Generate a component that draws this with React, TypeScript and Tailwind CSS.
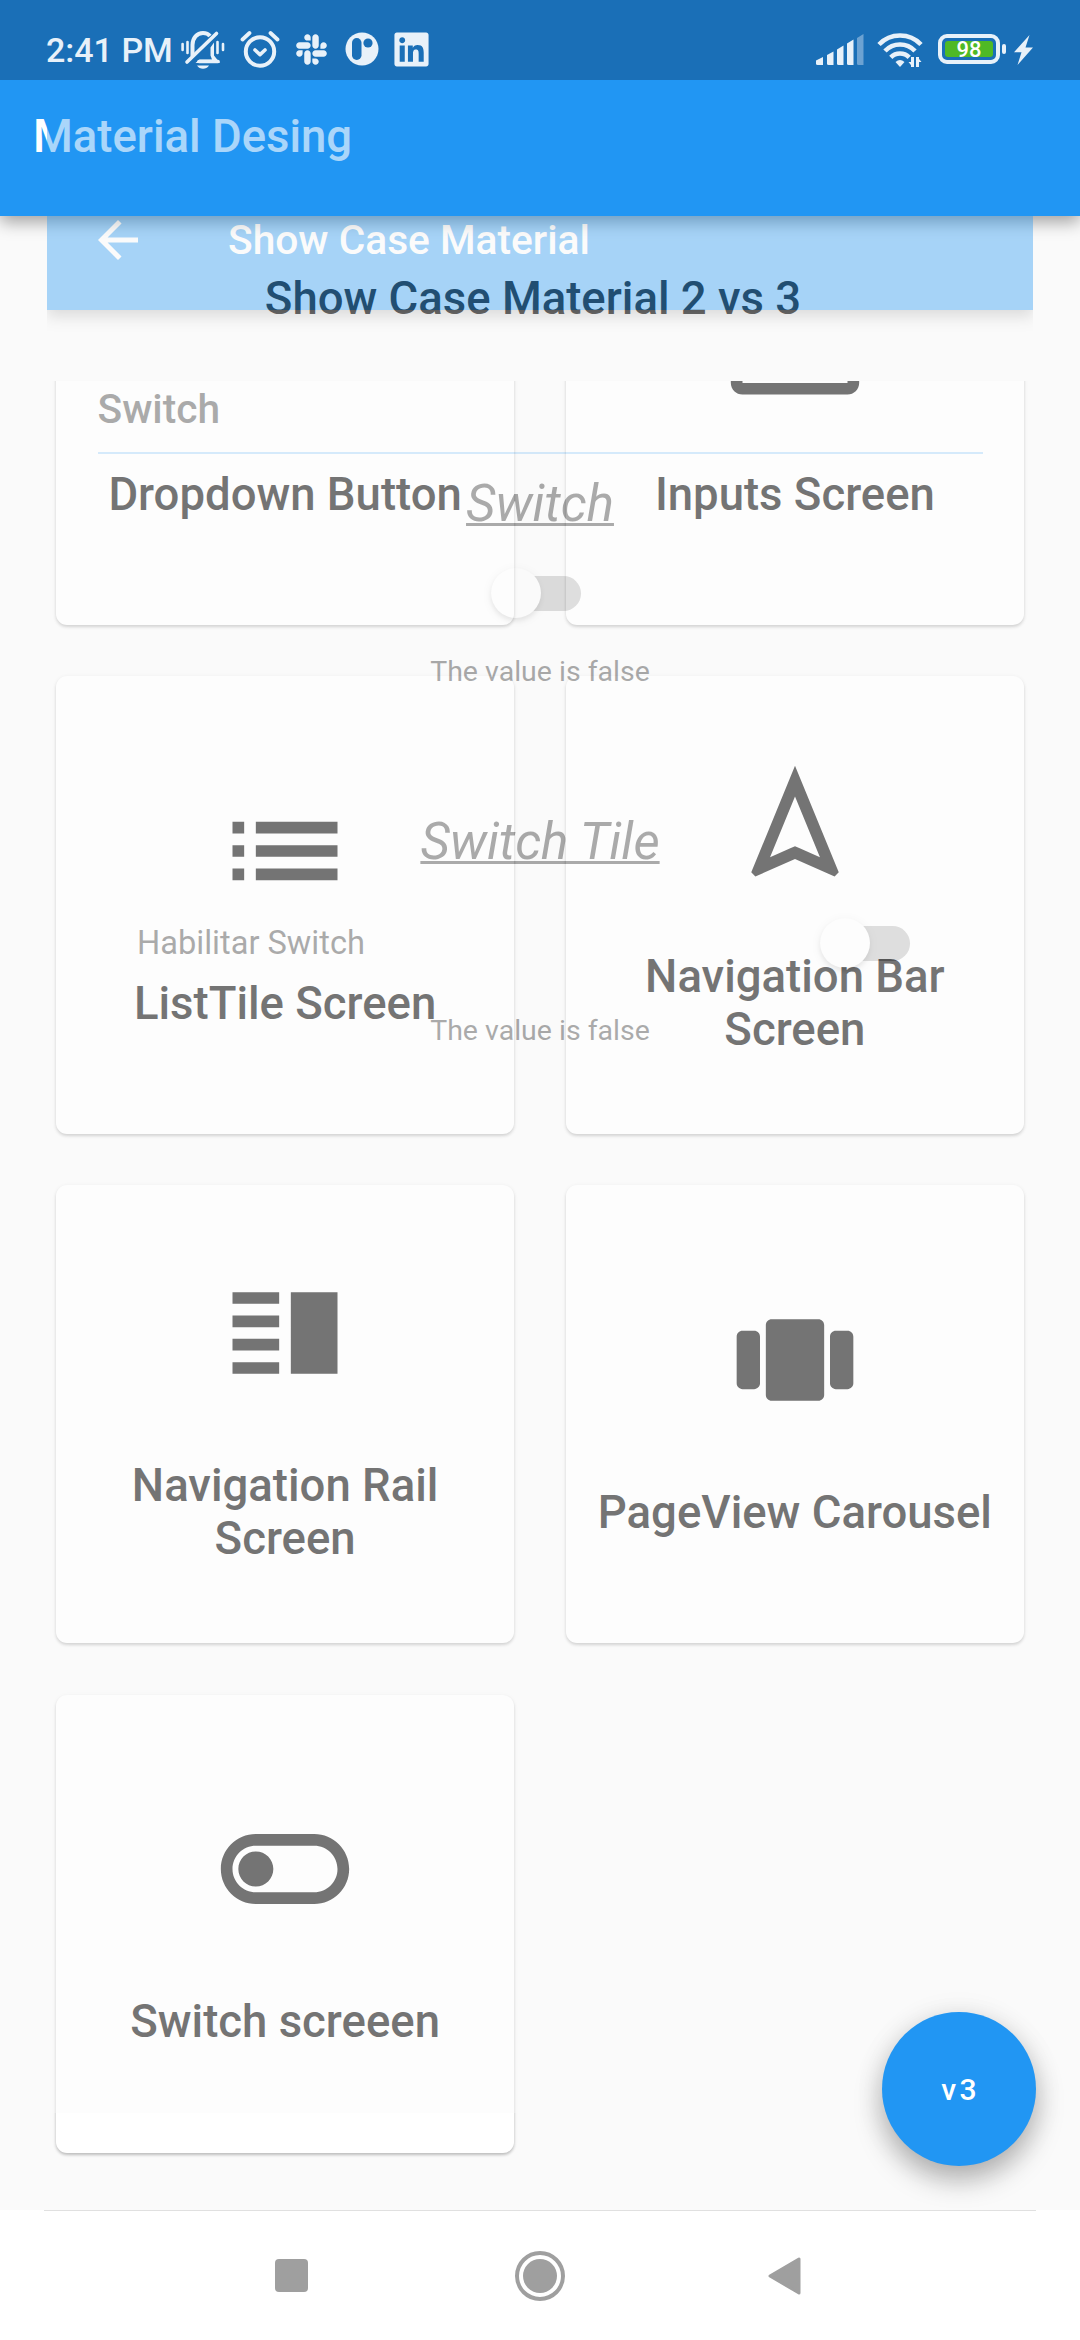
import React from "react";
import { FaLinkedin, FaSlack } from "react-icons/fa";

const CARD_ICONS = {
  dropdown: "M7 10l5 5 5-5z",
  input:
    "M21 3.01H3c-1.1 0-2 .9-2 2V9h2V4.99h18v14.03H3V15H1v4.01c0 1.1.9 1.98 2 1.98h18c1.1 0 2-.88 2-1.98v-14c0-1.11-.9-2-2-2zM11 16l4-4-4-4v3H1v2h10v3z",
  list: "M3 13h2v-2H3v2zm0 4h2v-2H3v2zm0-8h2V7H3v2zm4 4h14v-2H7v2zm0 4h14v-2H7v2zM7 7v2h14V7H7z",
  navigation:
    "M12 7.27l4.28 10.43-3.47-1.53-.81-.36-.81.36-3.47 1.53L12 7.27M12 2L4.5 20.29l.71.71L12 18l6.79 3 .71-.71L12 2z",
  split:
    "M3 15h8v-2H3v2zm0 4h8v-2H3v2zm0-8h8V9H3v2zm0-6v2h8V5H3zm10 0h8v14h-8V5z",
  carousel:
    "M3 7h2c.55 0 1 .45 1 1v8c0 .55-.45 1-1 1H3c-.55 0-1-.45-1-1V8c0-.55.45-1 1-1zm5-2h8c.55 0 1 .45 1 1v12c0 .55-.45 1-1 1H8c-.55 0-1-.45-1-1V6c0-.55.45-1 1-1zm11 2h2c.55 0 1 .45 1 1v8c0 .55-.45 1-1 1h-2c-.55 0-1-.45-1-1V8c0-.55.45-1 1-1z",
  toggle:
    "M17 6H7c-3.31 0-6 2.69-6 6s2.69 6 6 6h10c3.31 0 6-2.69 6-6s-2.69-6-6-6zm0 10H7c-2.21 0-4-1.79-4-4s1.79-4 4-4h10c2.21 0 4 1.79 4 4s-1.79 4-4 4zM7 9c-1.66 0-3 1.34-3 3s1.34 3 3 3 3-1.34 3-3-1.34-3-3-3z",
};

const CARDS: { icon: keyof typeof CARD_ICONS; label: string }[] = [
  { icon: "dropdown", label: "Dropdown Button" },
  { icon: "input", label: "Inputs Screen" },
  { icon: "list", label: "ListTile Screen" },
  { icon: "navigation", label: "Navigation Bar Screen" },
  { icon: "split", label: "Navigation Rail Screen" },
  { icon: "carousel", label: "PageView Carousel" },
  { icon: "toggle", label: "Switch screeen" },
];

function StatusBar() {
  return (
    <div className="relative z-10 flex h-20 shrink-0 items-start bg-[#1a6fb7] text-[#e8f1f9]">
      <span className="ml-[46px] mt-[30px] w-[131px] whitespace-nowrap text-[34px] font-medium leading-10">
        2:41 PM
      </span>
      <svg className="ml-1 mt-[30px] h-10 w-11" viewBox="0 0 44 40" fill="none" stroke="currentColor" strokeLinecap="round">
        <path d="M11.500 26V15c0-7 4.500-12 10.500-12c3 0 5.500 1 7 3" strokeWidth="4" strokeLinecap="butt" />
        <path d="M33 12.500v13l6 7.500H14.500l4-3.500H31l-1.500-4v-8z" fill="currentColor" stroke="none" />
        <path d="M18 31.500h19" strokeWidth="3.600" />
        <path d="M6 32L35.500 3.500" strokeWidth="3.600" />
        <path d="M16 35.500h12c-1.500 2.200-3.500 3.300-6 3.300s-4.500-1.100-6-3.300z" fill="currentColor" stroke="none" />
        <path d="M1.600 14v6M6.500 12v11M36.500 12v11M42 14v6" strokeWidth="2.600" />
      </svg>
      <svg className="ml-[15px] mt-[30px] h-10 w-10" viewBox="0 0 40 40" fill="none" stroke="currentColor" strokeLinecap="round">
        <circle cx="20" cy="21.500" r="14.200" strokeWidth="4" />
        <path d="M15 20l5 4.600 5-4.600" strokeWidth="3.600" strokeLinejoin="round" />
        <path d="M2.500 9.500l7-6.500M37.500 9.500l-7-6.500" strokeWidth="3.800" />
      </svg>
      <FaSlack className="ml-[14px] mt-[31.500px] h-[35px] w-[35px]" />
      <svg className="ml-4 mt-8 h-[34px] w-[34px]" viewBox="0 0 34 34">
        <circle cx="17" cy="17" r="16.500" fill="currentColor" />
        <rect x="7" y="6" width="9.500" height="22" rx="4.700" fill="#1a6fb7" />
        <circle cx="23" cy="11" r="4.600" fill="#1a6fb7" />
      </svg>
      <FaLinkedin className="ml-[13px] mt-[29.500px] h-[39px] w-[39px]" />
      <svg className="ml-[385px] mt-[34px] h-8 w-12" viewBox="0 0 48 32" fill="currentColor">
        <path d="M0 26.500l7-3.500v8H1.500q-1.500 0-1.500-1.500z" />
        <path d="M11 21l6.500-3.500V31h-5q-1.500 0-1.500-1.500z" />
        <path d="M21 15.500l6.500-4V31h-5q-1.500 0-1.500-1.500z" />
        <path d="M31 9.500l6.500-4V31h-5q-1.500 0-1.500-1.500z" />
        <path d="M41 4l6.500-4V31h-5q-1.500 0-1.500-1.500z" opacity=".4" />
      </svg>
      <svg className="ml-3 mt-[31px] h-9 w-[48px]" viewBox="0 0 48 36" fill="none" stroke="currentColor">
        <path d="M3 13.500a29 29 0 0 1 42 0" strokeWidth="4.600" />
        <path d="M9 20a20.500 20.500 0 0 1 30 0" strokeWidth="4.600" />
        <path d="M14.800 26.300a13 13 0 0 1 18.400 0" strokeWidth="4.600" />
        <path d="M19.500 31q4.500-4 9 0L24 36z" fill="currentColor" stroke="none" />
        <path d="M36.500 26v10M41.500 36V26" strokeWidth="3" />
        <path d="M32.500 31h4v5zM45.500 31h-4v-5z" fill="currentColor" stroke="none" />
      </svg>
      <div className="ml-[14px] mt-[34px] flex h-[30px] w-[62px] items-center rounded-[9px] border-4 border-[#e8f1f9] px-[3px]">
        <div className="flex h-4 w-12 items-center justify-center rounded-[3px] bg-[#4fb925] pt-0.5 text-[22px] font-medium leading-none text-white">
          98
        </div>
      </div>
      <div className="ml-[2px] mt-11 h-[10px] w-1 rounded-sm bg-[#e8f1f9]" />
      <svg className="ml-2 mt-[35px] h-[30px] w-[19px]" viewBox="0 0 19 30" fill="currentColor">
        <path d="M15.500 0L0 17.200h7.500L3.500 30 19 12.500h-7.500z" />
      </svg>
    </div>
  );
}

function Card({ icon, label }: { icon: keyof typeof CARD_ICONS; label: string }) {
  return (
    <div className="flex h-[458px] flex-col items-center justify-center gap-14 rounded-[11px] bg-white px-6 text-[#222222] shadow-[0_2px_3px_rgba(0,0,0,0.2),0_1px_4px_rgba(0,0,0,0.08)]">
      <svg className="h-[140px] w-[140px]" viewBox="0 0 24 24" fill="currentColor">
        <path d={CARD_ICONS[icon]} />
      </svg>
      <span className="max-w-[400px] text-center text-[45.500px] font-medium leading-[53px]">{label}</span>
    </div>
  );
}

function Toggle() {
  return (
    <div className="flex h-[50px] w-[90px] items-center">
      <div className="z-10 h-[50px] w-[50px] shrink-0 rounded-full bg-[#fafafa] shadow-[0_3px_4px_rgba(0,0,0,0.16),0_2px_8px_rgba(0,0,0,0.12)]" />
      <div className="-ml-[43px] h-[35px] w-[83px] shrink-0 rounded-full bg-[#a9a9a9]" />
    </div>
  );
}

/* Route that is fading and scaling over the home page during the transition. */
function SwitchRoute() {
  return (
    <section className="absolute left-[47px] top-[97px] flex h-[2016px] w-[986px] flex-col items-center overflow-hidden bg-[#fafafa] text-[#222222] opacity-[0.38]">
      <header className="h-[213px] w-full shrink-0 bg-[#2196f3] pt-[113px] text-white shadow-[0_6px_14px_rgba(0,0,0,0.33)]">
        <div className="flex h-[60px] items-center pl-[41px]">
          <svg className="h-[60px] w-[60px]" viewBox="0 0 24 24" fill="currentColor">
            <path d="M20 11H7.830l5.590-5.590L12 4l-8 8 8 8 1.410-1.410L7.830 13H20v-2z" />
          </svg>
          <h2 className="ml-20 whitespace-nowrap text-[40.700px] font-medium leading-[48px]">Show Case Material</h2>
        </div>
      </header>
      <h3 className="mt-[75px] w-[885px] text-[40.700px] font-medium leading-[48px]">Switch</h3>
      <div className="mt-[19px] h-[2px] w-[885px] shrink-0 bg-[#93caf7]" />
      <p className="mt-5 text-[51px] italic leading-[60px] underline decoration-[3px]">Switch</p>
      <div className="mr-2 mt-[34px]">
        <Toggle />
      </div>
      <p className="mt-[37px] text-[28.500px] leading-[34px]">The value is false</p>
      <p className="mt-[123px] text-[51px] italic leading-[60px] underline decoration-[3px]">Switch Tile</p>
      <div className="mt-[46px] flex w-full items-center justify-between pl-[90px] pr-[123px]">
        <span className="text-[32.600px] leading-[50px]">Habilitar Switch</span>
        <Toggle />
      </div>
      <p className="mt-[46px] text-[28.500px] leading-[34px]">The value is false</p>
    </section>
  );
}

function NavigationBar() {
  return (
    <nav className="flex h-[130px] flex-col items-center bg-white text-[#9f9f9f]">
      <div className="h-px w-[992px] bg-[#e0e0e0]" />
      <div className="flex h-[130px] w-full items-center pl-[275px]">
        <div className="h-[33px] w-[33px] rounded-sm bg-[#9f9f9f]" />
        <div className="ml-[207px] flex h-[50px] w-[50px] items-center justify-center rounded-full border-4 border-[#9f9f9f]">
          <div className="h-[34px] w-[34px] rounded-full bg-[#9f9f9f]" />
        </div>
        <svg className="ml-[203px] h-[38px] w-[33px]" viewBox="0 0 33 38" fill="currentColor" stroke="currentColor" strokeWidth="3" strokeLinejoin="round">
          <path d="M2 19L31 2v34z" />
        </svg>
      </div>
    </nav>
  );
}

export default function App() {
  return (
    <div className="relative flex h-[2340px] w-[1080px] flex-col overflow-hidden bg-[#fafafa] font-['Roboto',sans-serif]">
      <StatusBar />
      <header className="z-0 h-[136px] shrink-0 bg-[#2196f3] pl-[33px] pt-[30px] shadow-[0_6px_16px_rgba(0,0,0,0.36)]">
        <h1 className="text-[45.500px] font-medium leading-[54px] text-white">Material Desing</h1>
      </header>
      <div className="h-[165px] shrink-0 pt-[56px]">
        <h2 className="pr-[14px] text-center text-[45.500px] font-medium leading-[53px] text-[#222222]">
          Show Case Material 2 vs 3
        </h2>
      </div>
      <main className="h-[1829px] shrink-0 overflow-hidden px-14">
        <div className="-mt-[214px] grid grid-cols-2 gap-x-[51.500px] gap-y-[51.200px]">
          {CARDS.map((card) => (
            <Card key={card.label} {...card} />
          ))}
        </div>
      </main>
      <NavigationBar />
      <SwitchRoute />
      <div className="pointer-events-none absolute left-0 top-[1900px] h-[310px] w-full overflow-hidden">
        <button className="absolute left-[882px] top-[112px] flex h-[154px] w-[154px] items-center justify-center rounded-full bg-[#2196f3] pl-[3px] text-[30px] font-medium tracking-[3.300px] text-white shadow-[0_14px_28px_rgba(0,0,0,0.28),0_3px_30px_rgba(0,0,0,0.08)]">
          v3
        </button>
      </div>
    </div>
  );
}
